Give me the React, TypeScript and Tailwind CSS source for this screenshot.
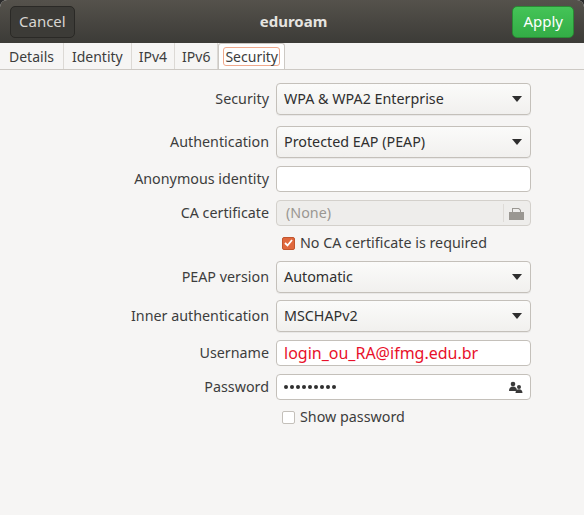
import React from "react";

const font = { fontFamily: '"Noto Sans", "DejaVu Sans", sans-serif' };

function Caret() {
  return (
    <svg width="10" height="6" viewBox="0 0 10 6"><path d="M0 0h10L5 6z" fill="#2e2e2e" /></svg>
  );
}

function Row({ label, h, mt, children }: { label?: string; h: number; mt: string; children: React.ReactNode }) {
  return (
    <div className={`flex items-center ${mt}`} style={{ height: h }}>
      <div className="w-[269px] pr-0 text-right text-[14.3px] text-[#3d3d3d]">{label}</div>
      <div className="ml-[7px] w-[255px] h-full flex items-center">{children}</div>
    </div>
  );
}

function Combo({ text }: { text: string }) {
  return (
    <div className="w-full h-full rounded-[4px] border border-[#c4c0ba] bg-gradient-to-b from-[#fbfbfa] to-[#f1f0ee] flex items-center justify-between pl-[7px] pr-[8px] text-[14.3px] text-[#2f2f2f] shadow-[0_1px_0_rgba(0,0,0,0.05)]">
      <span>{text}</span>
      <Caret />
    </div>
  );
}

export default function App() {
  return (
    <div style={font} className="w-[584px] h-[515px] bg-[#2b2b2b] overflow-hidden">
      <div className="w-full h-full bg-[#f6f5f4] rounded-t-[7px] overflow-hidden flex flex-col">
        <div className="h-[43px] bg-gradient-to-b from-[#55524c] to-[#3c3b37] flex items-center justify-between px-[10px]">
          <div className="h-[32px] px-[8px] rounded-[5px] border border-[#2a2926] bg-[#3c3b37] text-[#d8d6d2] text-[15px] flex items-center">Cancel</div>
          <div className="text-[#e6e4e0] text-[15px] font-bold">eduroam</div>
          <div className="h-[32px] px-[10px] rounded-[5px] border border-[#2a8a34] bg-gradient-to-b from-[#44c457] to-[#33ad46] text-white text-[15px] flex items-center">Apply</div>
        </div>
        <div className="h-[27px] bg-[#f6f5f4] border-b border-[#cdc9c4] flex items-end text-[14px] text-[#3d3d3d]">
          <div className="px-[9px] h-full flex items-center border-r border-[#dcd9d5]">Details</div>
          <div className="px-[8px] h-full flex items-center border-r border-[#dcd9d5]">Identity</div>
          <div className="px-[7px] h-full flex items-center border-r border-[#dcd9d5]">IPv4</div>
          <div className="px-[7px] h-full flex items-center border-r border-[#dcd9d5]">IPv6</div>
          <div className="px-[4px] h-full flex items-center bg-white border border-b-0 border-[#cdc9c4] rounded-t-[3px]">
            <span className="px-[1px] rounded-[3px] border border-[#f0a98c] leading-[17px]">Security</span>
          </div>
        </div>
        <div className="flex-1 bg-[#f6f5f4] flex flex-col">
          <Row label="Security" h={32} mt="mt-[13px]"><Combo text="WPA & WPA2 Enterprise" /></Row>
          <Row label="Authentication" h={32} mt="mt-[11px]"><Combo text="Protected EAP (PEAP)" /></Row>
          <Row label="Anonymous identity" h={26} mt="mt-[8px]">
            <div className="w-full h-full rounded-[4px] border border-[#c4c0ba] bg-white" />
          </Row>
          <Row label="CA certificate" h={26} mt="mt-[8px]">
            <div className="w-full h-full rounded-[4px] border border-[#d3d0cb] bg-[#eeedeb] flex items-center justify-between pl-[9px] pr-[6px] text-[14.3px] text-[#9a9792]">
              <span>(None)</span>
              <div className="flex items-center h-full">
                <div className="w-px h-[18px] bg-[#dedbd7] mr-[5px]" />
                <svg width="15" height="13" viewBox="0 0 15 13"><path d="M3 5V1h7l2 2v2h3v8H0V5z M4 5h7V3.5L9.5 2H4z" fill="#9a9792" fillRule="evenodd"/></svg>
              </div>
            </div>
          </Row>
          <Row h={18} mt="mt-[8px]">
            <div className="flex items-center gap-[5px] pl-[6px] text-[14.3px] text-[#3d3d3d]">
              <div className="w-[13px] h-[13px] rounded-[2px] bg-[#e0683d] border border-[#c2552d] flex items-center justify-center">
                <svg width="9" height="8" viewBox="0 0 9 8"><path d="M1 4l2.5 2.5L8 1" stroke="white" strokeWidth="1.8" fill="none"/></svg>
              </div>
              <span>No CA certificate is required</span>
            </div>
          </Row>
          <Row label="PEAP version" h={32} mt="mt-[9px]"><Combo text="Automatic" /></Row>
          <Row label="Inner authentication" h={32} mt="mt-[7px]"><Combo text="MSCHAPv2" /></Row>
          <Row label="Username" h={26} mt="mt-[8px]">
            <div className="w-full h-full rounded-[4px] border border-[#c4c0ba] bg-white flex items-center pl-[7px] text-[16px] text-[#e8102a]">login_ou_RA@ifmg.edu.br</div>
          </Row>
          <Row label="Password" h={26} mt="mt-[8px]">
            <div className="w-full h-full rounded-[4px] border border-[#c4c0ba] bg-white flex items-center justify-between pl-[7px] pr-[7px] text-[#2f2f2f]">
              <span className="flex gap-[2px]">
                {Array.from({ length: 9 }).map((_, i) => (
                  <span key={i} className="w-[4px] h-[4px] rounded-full bg-[#2f2f2f]" />
                ))}
              </span>
              <svg width="14" height="12" viewBox="0 0 14 12" fill="#3a3a3a"><circle cx="4" cy="3" r="2.3"/><path d="M0 10c0-3 1.5-4.5 4-4.5S8 7 8 10z"/><circle cx="10" cy="6" r="2"/><path d="M6.5 12c0-2.5 1.3-3.8 3.5-3.8s3.5 1.3 3.5 3.8z"/></svg>
            </div>
          </Row>
          <Row h={18} mt="mt-[8px]">
            <div className="flex items-center gap-[5px] pl-[6px] text-[14.3px] text-[#3d3d3d]">
              <div className="w-[13px] h-[13px] rounded-[2px] bg-white border border-[#c4c0ba]" />
              <span>Show password</span>
            </div>
          </Row>
        </div>
      </div>
    </div>
  );
}
